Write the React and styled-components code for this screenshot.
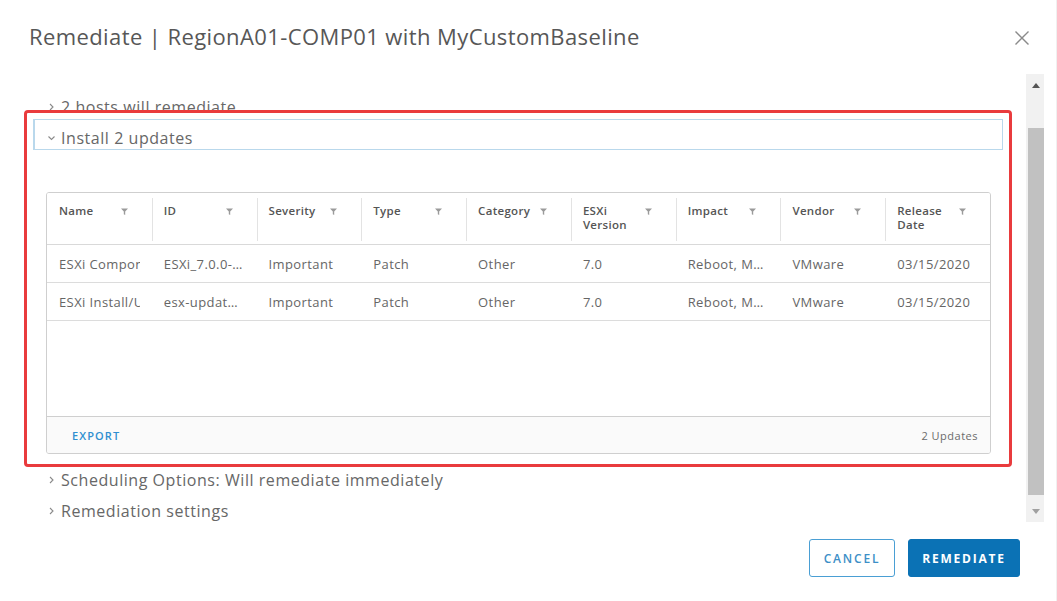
import React from "react";
import styled, { createGlobalStyle } from "styled-components";

const GlobalStyle = createGlobalStyle`
  html, body { margin: 0; padding: 0; background: #ffffff; }
  body { font-family: "Open Sans", "Liberation Sans", sans-serif; color: #565656; }
  * { box-sizing: border-box; }
`;

const Dialog = styled.div`
  position: relative;
  width: 1057px;
  height: 601px;
  display: flex;
  flex-direction: column;
  background: #fff;
  border-right: 1px solid #f0f0f0;
  overflow: hidden;
`;

const Header = styled.div`
  height: 73px;
  display: flex;
  align-items: center;
  justify-content: space-between;
  padding: 0 25px 0 29px;
`;

const Title = styled.h1`
  margin: 0;
  font-size: 22px;
  font-weight: 400;
  color: #575757;
  letter-spacing: 0.4px;
  position: relative;
  top: -1px;
`;

const CloseButton = styled.button`
  border: 0;
  background: none;
  padding: 0;
  width: 18px;
  height: 18px;
  display: flex;
  align-items: center;
  justify-content: center;
  position: relative;
  top: 1px;
`;

const Body = styled.div`
  display: flex;
  height: 449px;
`;

const ScrollContent = styled.div`
  flex: 1;
  overflow: hidden;
  padding: 15px 23px 0 33px;
`;

const Scrollbar = styled.div`
  width: 18px;
  margin: 1px 12px 0 0;
  background: #f1f1f1;
  display: flex;
  flex-direction: column;
  align-items: stretch;
`;

const ScrollArrow = styled.div`
  height: 22px;
  display: flex;
  align-items: center;
  justify-content: center;
  padding-left: 2px;
`;

const ScrollTrack = styled.div`
  flex: 1;
  display: flex;
  flex-direction: column;
  padding: 32px 0 5px 2px;
`;

const ScrollThumb = styled.div`
  flex: 1;
  background: #c1c1c1;
`;

const ItemHeader = styled.div`
  height: 31px;
  display: flex;
  align-items: center;
  padding: 6px 0 0 ${(p) => (p.$focused ? "12px" : "13px")};
  font-size: 16px;
  letter-spacing: 0.55px;
  color: #676767;
  border: 1px solid ${(p) => (p.$focused ? "#b9d8ec" : "transparent")};
  border-left-width: ${(p) => (p.$focused ? "2px" : "1px")};
  gap: 5px;
`;

const Panel = styled.div`
  padding: 42px 12px 7px 13px;
`;

const Table = styled.div`
  border: 1px solid #cfcfcf;
  border-radius: 3px;
  display: flex;
  flex-direction: column;
  height: 262px;
  overflow: hidden;
`;

const Grid = styled.div`
  display: grid;
  grid-template-columns: repeat(9, 1fr);
`;

const HeaderRow = styled(Grid)`
  height: 52px;
  border-bottom: 1px solid #d9d9d9;
  background: #fff;
`;

const HeaderCell = styled.div`
  position: relative;
  display: flex;
  align-items: flex-start;
  padding: 11px 24px 0 12px;
  font-size: 11.5px;
  line-height: 14px;
  font-weight: 600;
  letter-spacing: 0.3px;
  color: #555;

  & + &::before {
    content: "";
    position: absolute;
    left: 0;
    top: 5px;
    bottom: 3px;
    width: 1px;
    background: #e3e3e3;
  }
`;

const HeaderLabel = styled.span`
  flex: 1;
`;

const FilterIcon = styled.svg`
  width: 7px;
  height: 7px;
  margin-top: 4px;
  flex: none;
`;

const Row = styled(Grid)`
  height: 38px;
  border-bottom: 1px solid #dcdcdc;
  align-items: center;
`;

const Cell = styled.div`
  padding: 0 12px;
  min-width: 0;
`;

const CellText = styled.div`
  font-size: 13px;
  letter-spacing: 0.4px;
  color: #666;
  white-space: nowrap;
  overflow: hidden;
  text-overflow: ${(p) => (p.$clip ? "clip" : "ellipsis")};
`;

const TableSpacer = styled.div`
  flex: 1;
`;

const TableFooter = styled.div`
  height: 37px;
  border-top: 1px solid #cfcfcf;
  background: #fafafa;
  display: flex;
  align-items: center;
  justify-content: space-between;
  padding: 0 12px 0 25px;
`;

const ExportLink = styled.span`
  font-size: 11px;
  font-weight: 600;
  color: #2f8fd0;
  letter-spacing: 1.1px;
`;

const Count = styled.span`
  font-size: 11px;
  color: #6b6b6b;
  letter-spacing: 0.5px;
`;

const Footer = styled.div`
  flex: 1;
  display: flex;
  justify-content: flex-end;
  align-items: flex-start;
  gap: 13px;
  padding: 17px 36px 0 0;
`;

const Button = styled.button`
  height: 38px;
  padding: 0 ${(p) => (p.$primary ? "10px" : "11px")};
  border-radius: 3px;
  border: 1px solid ${(p) => (p.$primary ? "#0b72b5" : "#4a9fd4")};
  background: ${(p) => (p.$primary ? "#0b72b5" : "#fff")};
  color: ${(p) => (p.$primary ? "#fff" : "#3d8fc7")};
  font-family: "Open Sans", "Liberation Sans", sans-serif;
  font-size: 12px;
  font-weight: ${(p) => (p.$primary ? 700 : 600)};
  letter-spacing: 1.8px;
  min-width: ${(p) => (p.$primary ? "112px" : "86px")};
`;

const Highlight = styled.div`
  position: absolute;
  left: 24px;
  top: 110px;
  width: 988px;
  height: 357px;
  border: 3px solid #e93b3d;
  border-radius: 4px;
  pointer-events: none;
`;

const Chevron = ({ down }) => (
  <svg width="9" height="10" viewBox="0 0 9 10" style={{ flex: "none" }}>
    {down ? (
      <path d="M1.5 3.5 L4.5 6.5 L7.5 3.5" fill="none" stroke="#8a8a8a" strokeWidth="1.1" />
    ) : (
      <path d="M3 2 L6 5 L3 8" fill="none" stroke="#8a8a8a" strokeWidth="1.1" />
    )}
  </svg>
);

const Filter = () => (
  <FilterIcon viewBox="0 0 7 7">
    <path d="M0 0.5 H7 L4.2 3.4 V7 L2.8 6.2 V3.4 Z" fill="#9a9a9a" />
  </FilterIcon>
);

const columns = [
  ["Name"],
  ["ID"],
  ["Severity"],
  ["Type"],
  ["Category"],
  ["ESXi", "Version"],
  ["Impact"],
  ["Vendor"],
  ["Release", "Date"],
];

const rows = [
  ["ESXi Component", "ESXi_7.0.0-1.20.16321839", "Important", "Patch", "Other", "7.0", "Reboot, Maintenance mode", "VMware", "03/15/2020"],
  ["ESXi Install/Upgrade Component", "esx-update_7.0.0-1.20.16321839", "Important", "Patch", "Other", "7.0", "Reboot, Maintenance mode", "VMware", "03/15/2020"],
];

export default function App() {
  return (
    <>
      <GlobalStyle />
      <Dialog>
        <Header>
          <Title>Remediate | RegionA01-COMP01 with MyCustomBaseline</Title>
          <CloseButton aria-label="Close">
            <svg width="16" height="16" viewBox="0 0 16 16">
              <path d="M1.5 1.5 L14.5 14.5 M14.5 1.5 L1.5 14.5" stroke="#8a8a8a" strokeWidth="1.4" />
            </svg>
          </CloseButton>
        </Header>
        <Body>
          <ScrollContent>
            <ItemHeader>
              <Chevron />
              <span>2 hosts will remediate</span>
            </ItemHeader>
            <ItemHeader $focused>
              <Chevron down />
              <span>Install 2 updates</span>
            </ItemHeader>
            <Panel>
              <Table>
                <HeaderRow>
                  {columns.map((c) => (
                    <HeaderCell key={c.join(" ")}>
                      <HeaderLabel>
                        {c.map((l, i) => (
                          <React.Fragment key={l}>
                            {i > 0 && <br />}
                            {l}
                          </React.Fragment>
                        ))}
                      </HeaderLabel>
                      <Filter />
                    </HeaderCell>
                  ))}
                </HeaderRow>
                {rows.map((r, ri) => (
                  <Row key={ri}>
                    {r.map((v, i) => (
                      <Cell key={i}>
                        <CellText $clip={i === 0}>{v}</CellText>
                      </Cell>
                    ))}
                  </Row>
                ))}
                <TableSpacer />
                <TableFooter>
                  <ExportLink>EXPORT</ExportLink>
                  <Count>2 Updates</Count>
                </TableFooter>
              </Table>
            </Panel>
            <ItemHeader>
              <Chevron />
              <span>Scheduling Options: Will remediate immediately</span>
            </ItemHeader>
            <ItemHeader>
              <Chevron />
              <span>Remediation settings</span>
            </ItemHeader>
          </ScrollContent>
          <Scrollbar>
            <ScrollArrow>
              <svg width="8" height="5" viewBox="0 0 8 5">
                <path d="M0 5 L4 0 L8 5 Z" fill="#555" />
              </svg>
            </ScrollArrow>
            <ScrollTrack>
              <ScrollThumb />
            </ScrollTrack>
            <ScrollArrow>
              <svg width="8" height="5" viewBox="0 0 8 5">
                <path d="M0 0 L8 0 L4 5 Z" fill="#a0a0a0" />
              </svg>
            </ScrollArrow>
          </Scrollbar>
        </Body>
        <Footer>
          <Button>CANCEL</Button>
          <Button $primary>REMEDIATE</Button>
        </Footer>
        <Highlight />
      </Dialog>
    </>
  );
}
